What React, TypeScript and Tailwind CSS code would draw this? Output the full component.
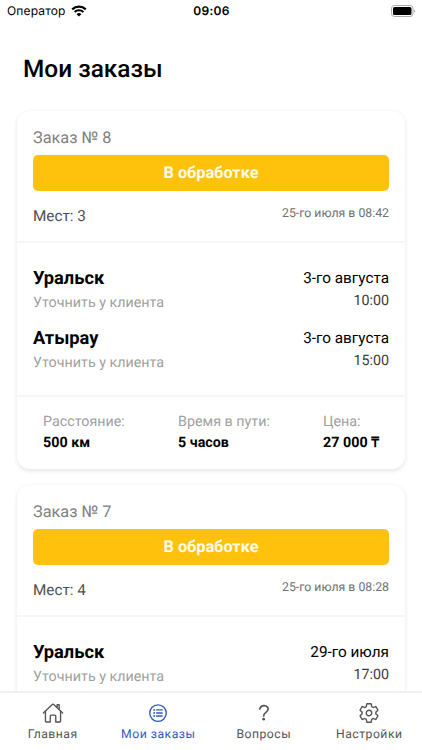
import clsx from "clsx";
import { IconType } from "react-icons";
import {
  IoHelp,
  IoHomeOutline,
  IoListCircleOutline,
  IoSettingsOutline,
} from "react-icons/io5";

type Stop = { city: string; date: string; time: string };

type Order = {
  id: number;
  seats: number;
  created: string;
  stops: Stop[];
  metrics?: { label: string; value: string }[];
};

const ORDERS: Order[] = [
  {
    id: 8,
    seats: 3,
    created: "25-го июля в 08:42",
    stops: [
      { city: "Уральск", date: "3-го августа", time: "10:00" },
      { city: "Атырау", date: "3-го августа", time: "15:00" },
    ],
    metrics: [
      { label: "Расстояние:", value: "500 км" },
      { label: "Время в пути:", value: "5 часов" },
      { label: "Цена:", value: "27 000 ₸" },
    ],
  },
  {
    id: 7,
    seats: 4,
    created: "25-го июля в 08:28",
    stops: [{ city: "Уральск", date: "29-го июля", time: "17:00" }],
  },
];

const TABS: { label: string; icon: IconType; active?: boolean }[] = [
  { label: "Главная", icon: IoHomeOutline },
  { label: "Мои заказы", icon: IoListCircleOutline, active: true },
  { label: "Вопросы", icon: IoHelp },
  { label: "Настройки", icon: IoSettingsOutline },
];

function StatusBar() {
  return (
    <header className="grid h-[22px] shrink-0 grid-cols-3 items-center pl-[7px] pr-[6px] font-['Inter',sans-serif] text-[12px] text-black">
      <div className="flex items-center gap-[5px]">
        <span className="tracking-[0.15px]">Оператор</span>
        <svg width="16" height="12" viewBox="0 0 16 12" fill="none">
          <path d="M1.2 4.4a9.8 9.8 0 0 1 13.6 0" stroke="#000" strokeWidth="2.3" />
          <path d="M3.6 7a6.3 6.3 0 0 1 8.8 0" stroke="#000" strokeWidth="2.1" />
          <path d="M8 11.6 5.6 9.2a3.4 3.4 0 0 1 4.8 0Z" fill="#000" />
        </svg>
      </div>
      <span className="text-center font-semibold tracking-[0.3px]">09:06</span>
      <svg className="justify-self-end" width="25" height="12" viewBox="0 0 25 12">
        <rect x="0.5" y="0.5" width="21.5" height="11" rx="3" fill="none" stroke="#aaa" />
        <rect x="2" y="2" width="18.5" height="8" rx="1.6" fill="#000" />
        <path d="M23.3 4.2c1.2.5 1.2 3.1 0 3.6Z" fill="#999" />
      </svg>
    </header>
  );
}

function OrderCard({ order }: { order: Order }) {
  return (
    <article className="h-[357.5px] shrink-0 rounded-[13px] bg-white shadow-[0_1.5px_4px_rgba(0,0,0,0.1)]">
      <div className="h-[132px] border-b-2 border-[#f6f6f6] px-4 pt-[15px]">
        <h2 className="text-[16.3px] leading-6 text-[#808080]">Заказ № {order.id}</h2>
        <div className="mt-[5px] h-9 rounded-[5px] bg-[#ffc20c] text-center text-[16.3px] leading-9 font-bold text-[#fffbea]">
          В обработке
        </div>
        <div className="mt-[13px] flex justify-between">
          <span className="text-[15.3px] leading-6 text-[#505050]">Мест: {order.seats}</span>
          <span className="text-[12.3px] leading-5 text-[#707070]">{order.created}</span>
        </div>
      </div>
      <div className="flex h-[154px] flex-col gap-[13px] border-b-2 border-[#f6f6f6] px-4 pt-6">
        {order.stops.map((stop) => (
          <div key={stop.city} className="flex h-[47px] justify-between">
            <div>
              <div className="text-[18.3px] leading-6 font-bold text-black">{stop.city}</div>
              <div className="text-[14.3px] leading-[24px] text-[#a0a0a0]">Уточнить у клиента</div>
            </div>
            <div className="text-right">
              <div className="text-[15.3px] leading-[23px] text-black">{stop.date}</div>
              <div className="text-[14.3px] leading-[22px] text-[#404040]">{stop.time}</div>
            </div>
          </div>
        ))}
      </div>
      {order.metrics && (
        <div className="flex justify-between px-[26px] pt-[15px]">
          {order.metrics.map(({ label, value }) => (
            <div key={label}>
              <div className="text-[14.3px] leading-[21px] text-[#a0a0a0]">{label}</div>
              <div className="text-[14.3px] leading-[21px] font-bold text-black">{value}</div>
            </div>
          ))}
        </div>
      )}
    </article>
  );
}

function TabBar() {
  return (
    <nav className="grid h-[59px] shrink-0 grid-cols-4 border-t-2 border-[#f1f1f1] bg-white">
      {TABS.map(({ label, icon: Icon, active }) => (
        <div
          key={label}
          className={clsx(
            "flex flex-col items-center pt-[9px]",
            active ? "text-[#3058c4]" : "text-[#555]"
          )}
        >
          <Icon className="size-[22px]" />
          <span className="mt-px text-[12.2px] leading-[18px] tracking-[0.5px] whitespace-nowrap">
            {label}
          </span>
        </div>
      ))}
    </nav>
  );
}

export default function App() {
  return (
    <div className="flex h-[750px] w-[422px] flex-col overflow-hidden bg-white font-['Roboto',sans-serif] [text-rendering:geometricPrecision]">
      <StatusBar />
      <h1 className="shrink-0 pt-[31px] pl-[23px] text-[24.4px] leading-8 font-medium text-black">
        Мои заказы
      </h1>
      <main className="flex min-h-0 flex-1 flex-col gap-4 overflow-hidden px-[17px] pt-[26px]">
        {ORDERS.map((order) => (
          <OrderCard key={order.id} order={order} />
        ))}
      </main>
      <TabBar />
    </div>
  );
}
